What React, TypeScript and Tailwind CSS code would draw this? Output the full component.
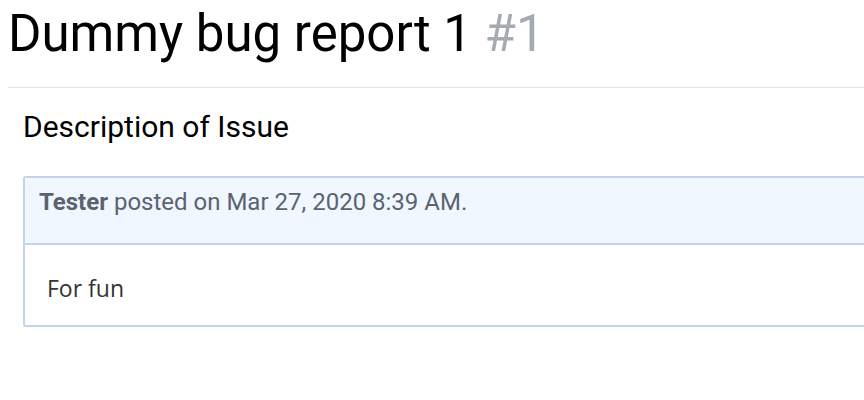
export default function App() {
  return (
    <div className="min-h-[400px] w-[864px] overflow-hidden bg-white font-['Roboto',sans-serif]">
      <h1 className="pl-2 pt-1 text-[51px] leading-[60px] text-black">
        Dummy bug report 1 <span className="text-[#a6abb3]">#1</span>
      </h1>
      <hr className="ml-2 mt-[23px] border-t border-[#e3e3e3]" />
      <div className="pl-[23px] pt-[21px]">
        <h2 className="text-[30px] leading-9 text-black">Description of Issue</h2>
        <div className="mt-[31px] -mr-4 rounded-[3px] border-2 border-[#c3d4ea]">
          <div className="h-[67px] border-b-2 border-[#c3d4ea] bg-[#f0f7ff] px-[14px] pt-[10px] text-[24px] leading-7 text-[#5b6370]">
            <span className="font-bold">Tester</span> posted on Mar 27, 2020 8:39 AM.
          </div>
          <div className="h-[80px] px-[22px] pt-[29px] font-['Open_Sans',sans-serif] text-[23px] leading-7 text-[#333]">
            For fun
          </div>
        </div>
      </div>
    </div>
  );
}
